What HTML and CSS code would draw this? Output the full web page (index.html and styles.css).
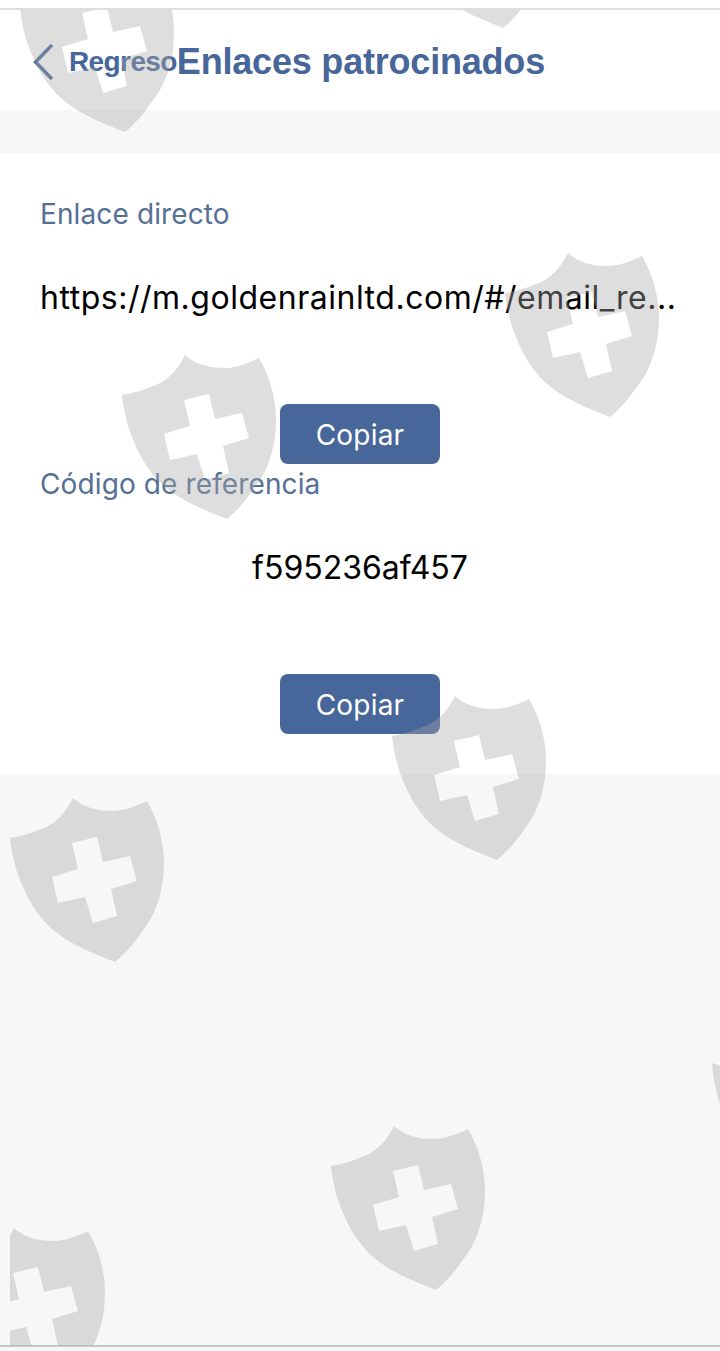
FILE: index.html
```html
<!DOCTYPE html>
<html lang="es">
<head>
<meta charset="utf-8">
<title>Enlaces patrocinados</title>
<link rel="stylesheet" href="styles.css">
</head>
<body>
<div class="page">
  <div class="statusbar"></div>
  <header class="topbar">
    <a class="back">
      <svg class="chevron" width="22" height="38" viewBox="0 0 22 38"><path d="M20 2 L3.5 19 L20 36" fill="none" stroke="#47669a" stroke-width="3.4"/></svg>
      <span class="back-label">Regreso</span>
    </a>
    <h1 class="title">Enlaces patrocinados</h1>
  </header>
  <main class="card">
    <section class="block">
      <div class="label">Enlace directo</div>
      <div class="value value-left">https://m.goldenrainltd.com/#/email_re...</div>
      <div class="action"><button class="copy">Copiar</button></div>
    </section>
    <section class="block">
      <div class="label">Código de referencia</div>
      <div class="value">f595236af457</div>
      <div class="action"><button class="copy">Copiar</button></div>
    </section>
  </main>
  <div class="bottomline"></div>
  <svg class="watermark" viewBox="10 10 710 1336" width="710" height="1336" aria-hidden="true">
    <defs>
      <path id="shield" fill-rule="evenodd" d="M63 0 C56 14 47 24 36 29 C25 34 12 38 0 40 C2 60 7 76 13 89 C20 106 32 124 47 135 C64 148 85 156 105 164 C117 155 131 136 140 122 C148 108 154 88 154 65 C154 42 147 20 137 3 C125 9 112 13 103 13 C88 13 74 10 63 0 Z M62 45 L87 39 L93 64 L120 58 L127 83 L101 91 L107 118 L83 125 L75 99 L48 105 L42 79 L68 71 Z"/>
    </defs>
    <use href="#shield" class="mark" x="20" y="-32"/>
    <use href="#shield" class="mark" x="398" y="-136"/>
    <use href="#shield" class="mark" x="505" y="253"/>
    <use href="#shield" class="mark" x="122" y="355"/>
    <use href="#shield" class="mark" x="392" y="696"/>
    <use href="#shield" class="mark" x="10" y="798"/>
    <use href="#shield" class="mark" x="331" y="1126"/>
    <use href="#shield" class="mark" x="-49" y="1228"/>
    <path class="mark" d="M712 1063 L720 1066 L720 1104 C716 1092 713 1078 712 1063 Z"/>
  </svg>
</div>
</body>
</html>
```
FILE: styles.css
```css
* { box-sizing: border-box; }
html, body { margin: 0; padding: 0; }
body {
  width: 720px;
  height: 1351px;
  overflow: hidden;
  background: #f7f7f7;
  font-family: Inter, "Liberation Sans", Arial, sans-serif;
}
.page {
  position: relative;
  height: 1351px;
  display: flex;
  flex-direction: column;
}
.statusbar {
  height: 10px;
  background: #fff;
  border-bottom: 2px solid #dedede;
}
.topbar {
  height: 100px;
  background: #fff;
  display: flex;
  align-items: center;
  padding: 4px 0 0 32px;
  margin-bottom: 43px;
  font-family: "Liberation Sans", Arial, sans-serif;
}
.back {
  display: flex;
  align-items: center;
  gap: 15px;
  color: #47669a;
}
.chevron { display: block; }
.back-label {
  font-size: 28px;
  font-weight: 700;
  letter-spacing: -0.6px;
}
.title {
  margin: 0;
  font-size: 36px;
  font-weight: 700;
  letter-spacing: -0.2px;
  color: #47669a;
}
.card {
  height: 621px;
  background: #fff;
  padding: 41px 40px 40px;
}
.label {
  font-size: 28px;
  line-height: 40px;
  letter-spacing: 0.12px;
  color: #557095;
}
.value {
  margin-top: 41px;
  font-size: 32px;
  line-height: 46px;
  color: #000;
  text-align: center;
  white-space: nowrap;
}
.value-left {
  text-align: left;
  letter-spacing: 0.52px;
}
.action {
  margin-top: 83px;
  display: flex;
  justify-content: center;
}
.copy {
  width: 160px;
  height: 60px;
  border: 0;
  border-radius: 8px;
  background: #47669a;
  color: #fff;
  font-family: inherit;
  font-size: 28px;
  letter-spacing: 0.2px;
  padding: 2px 0 0;
}
.bottomline {
  margin-top: auto;
  height: 2px;
  margin-bottom: 4px;
  background: #c9c9c9;
}
.watermark {
  position: absolute;
  left: 10px;
  top: 10px;
  overflow: hidden;
  pointer-events: none;
}
.mark { fill: rgba(168, 168, 168, 0.38); }
```
